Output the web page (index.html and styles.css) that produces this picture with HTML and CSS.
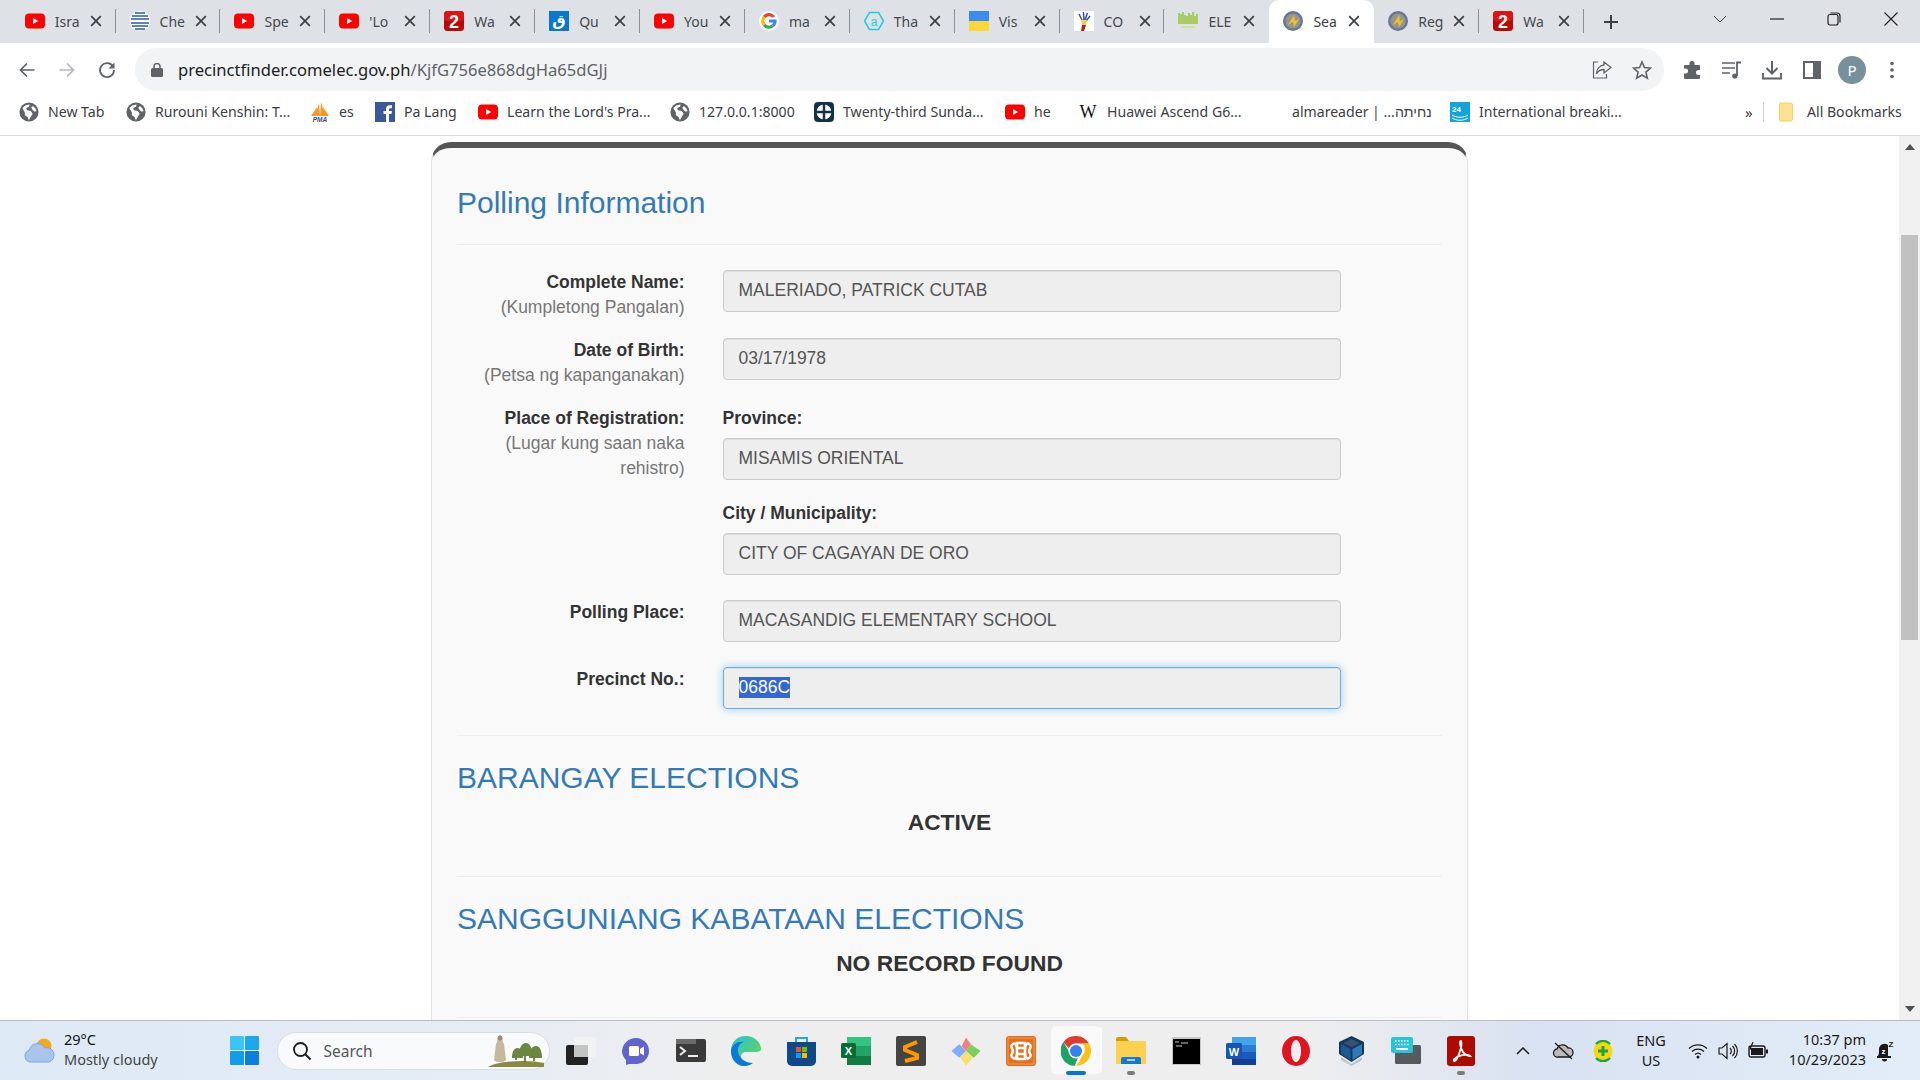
FILE: index.html
```html
<!DOCTYPE html>
<html lang="en">
<head>
  <meta charset="UTF-8" />
  <meta name="viewport" content="width=device-width, initial-scale=1.0" />
  <title>Precinct Finder</title>
  <link rel="stylesheet" href="styles.css">
</head>
<body>
  <svg class="icon-defs" aria-hidden="true">
    <symbol id="i-yt" viewBox="0 0 20 20"><rect x="0" y="2.500" width="20" height="15" rx="4" fill="#f00"/><path d="M8 7l5.200 3L8 13z" fill="#fff"/></symbol>
    <symbol id="i-two" viewBox="0 0 20 20"><rect width="20" height="20" rx="3.500" fill="#b80808"/><rect width="20" height="10" rx="3.500" fill="#dc1414"/><text x="10" y="17" text-anchor="middle" class="two-glyph">2</text></symbol>
    <symbol id="i-globe" viewBox="0 0 18 18"><circle cx="9" cy="9" r="8.600" fill="#5f6368"/><path d="M3 5.500l3-2.600 3.600-.6-.6 2-2.400 1.200.5 2 3.600.6 1.600 2.600-2 3-1.400 2.800-1.200-3-2.400-1.600v-2.400zM12.600 3.600l2.400 2.400.8 2.400-2.200.2-1.600-1.800-1-1.800z" fill="#fff"/></symbol>
    <symbol id="i-seal" viewBox="0 0 20 20"><circle cx="10" cy="10" r="10" fill="#66779f"/><circle cx="10" cy="10" r="7.500" fill="#9a9680"/><path d="M5 14L11 4l1 6 4-2-5 8-1-5z" fill="#e4c23a"/></symbol>
    <symbol id="i-x" viewBox="0 0 12 12"><path d="M1.200 1.200l9.600 9.600M10.800 1.200l-9.600 9.600" stroke="#3c4043" stroke-width="1.700" fill="none"/></symbol>
  </svg>

  <div class="browser">
    <div class="tabstrip">
      <div class="tab"><svg class="favicon"><use href="#i-yt"/></svg><span class="tab-title">Isra</span><svg class="tab-close"><use href="#i-x"/></svg></div>
      <div class="tab"><svg class="favicon" viewBox="0 0 20 20"><circle cx="10" cy="10" r="10" fill="#fff"/><path d="M2 5h16M1 8h18M1 12h18M2 15h16M5 18h10M5 2h10" stroke="#2c5fa0" stroke-width="1.600"/><rect x="1" y="9" width="18" height="2" fill="#fff"/></svg><span class="tab-title">Che</span><svg class="tab-close"><use href="#i-x"/></svg></div>
      <div class="tab"><svg class="favicon"><use href="#i-yt"/></svg><span class="tab-title">Spe</span><svg class="tab-close"><use href="#i-x"/></svg></div>
      <div class="tab"><svg class="favicon"><use href="#i-yt"/></svg><span class="tab-title">'Lo</span><svg class="tab-close"><use href="#i-x"/></svg></div>
      <div class="tab"><svg class="favicon"><use href="#i-two"/></svg><span class="tab-title">Wa</span><svg class="tab-close"><use href="#i-x"/></svg></div>
      <div class="tab"><svg class="favicon" viewBox="0 0 20 20"><rect width="20" height="20" fill="#0a78c8"/><text x="10" y="15" text-anchor="middle" class="qaf-glyph">ق</text></svg><span class="tab-title">Qu</span><svg class="tab-close"><use href="#i-x"/></svg></div>
      <div class="tab"><svg class="favicon"><use href="#i-yt"/></svg><span class="tab-title">You</span><svg class="tab-close"><use href="#i-x"/></svg></div>
      <div class="tab"><svg class="favicon" viewBox="0 0 20 20"><circle cx="10" cy="10" r="10" fill="#fff"/><path d="M16 5.200A7.500 7.500 0 0 0 4 5l2.600 2a4.400 4.400 0 0 1 7-.2z" fill="#ea4335"/><path d="M4 5a7.600 7.600 0 0 0 0 10l2.600-2a4.400 4.400 0 0 1 0-6z" fill="#fbbc05"/><path d="M4 15a7.500 7.500 0 0 0 11 .8l-2.500-2a4.400 4.400 0 0 1-5.900-.8z" fill="#34a853"/><path d="M17.500 8.600H10v3h4.200a3.800 3.800 0 0 1-1.700 2.200l2.500 2a7.600 7.600 0 0 0 2.500-7.200z" fill="#4285f4"/></svg><span class="tab-title">ma</span><svg class="tab-close"><use href="#i-x"/></svg></div>
      <div class="tab"><svg class="favicon" viewBox="0 0 20 20"><path d="M5.500 1.500h9L19.500 10l-5 8.500h-9L.5 10z" fill="none" stroke="#22cde0" stroke-width="1.500"/><text x="10" y="14.500" text-anchor="middle" class="hex-glyph">a</text></svg><span class="tab-title">Tha</span><svg class="tab-close"><use href="#i-x"/></svg></div>
      <div class="tab"><svg class="favicon" viewBox="0 0 20 20"><rect width="20" height="10" fill="#3a8cf0"/><rect y="10" width="20" height="10" fill="#fdd835"/></svg><span class="tab-title">Vis</span><svg class="tab-close"><use href="#i-x"/></svg></div>
      <div class="tab"><svg class="favicon" viewBox="0 0 20 20"><rect width="20" height="20" fill="#fff"/><path d="M8 9L5 3M10 9l-.6-8M11 9l2.400-7M12 10l4-5" stroke="#3b4fb0" stroke-width="1.500"/><path d="M7 9h6l-1 5H8z" fill="#f3d34a"/><path d="M8 14h4l-2 6H7z" fill="#a8201a"/></svg><span class="tab-title">CO</span><svg class="tab-close"><use href="#i-x"/></svg></div>
      <div class="tab tab-before-active"><svg class="favicon" viewBox="0 0 20 20"><path d="M1 2v11M3 3v10M5 1v12M7 4v9M9 5v8M11 2v11M13 4v9M15 1v12M17 5v8M19 3v10" stroke="#8fbf1f" stroke-width="1.300"/><path d="M3 16h14" stroke="#cfe39a" stroke-width="2"/></svg><span class="tab-title">ELE</span><svg class="tab-close"><use href="#i-x"/></svg></div>
      <div class="tab tab-active"><svg class="favicon"><use href="#i-seal"/></svg><span class="tab-title">Sea</span><svg class="tab-close"><use href="#i-x"/></svg></div>
      <div class="tab tab-after-active"><svg class="favicon"><use href="#i-seal"/></svg><span class="tab-title">Reg</span><svg class="tab-close"><use href="#i-x"/></svg></div>
      <div class="tab"><svg class="favicon"><use href="#i-two"/></svg><span class="tab-title">Wa</span><svg class="tab-close"><use href="#i-x"/></svg></div>
      <svg class="new-tab" viewBox="0 0 16 16"><path d="M8 1v14M1 8h14" stroke="#3c4043" stroke-width="2"/></svg>
      <div class="window-controls">
        <div class="window-btn"><svg width="14" height="8" viewBox="0 0 14 8"><path d="M1 1l6 6 6-6" fill="none" stroke="#444" stroke-width="1"/></svg></div>
        <div class="window-btn"><svg width="14" height="2" viewBox="0 0 14 2"><path d="M0 1h14" stroke="#222" stroke-width="1.200"/></svg></div>
        <div class="window-btn"><svg width="14" height="14" viewBox="0 0 14 14"><rect x="1" y="2.500" width="10" height="10.500" rx="2" fill="none" stroke="#222" stroke-width="1.200"/><path d="M3.500 1h6.500a3 3 0 0 1 3 3v6.500" fill="none" stroke="#222" stroke-width="1.200"/></svg></div>
        <div class="window-btn"><svg width="14" height="14" viewBox="0 0 14 14"><path d="M.5.500l13 13M13.500.500l-13 13" stroke="#222" stroke-width="1.100"/></svg></div>
      </div>
    </div>

    <div class="toolbar">
      <div class="tool-btn"><svg width="16" height="16" viewBox="0 0 16 16"><path d="M15.500 8H2M8 1.500L1.500 8 8 14.500" fill="none" stroke="#5f6368" stroke-width="1.700"/></svg></div>
      <div class="tool-btn"><svg width="16" height="16" viewBox="0 0 16 16"><path d="M.5 8H14M8 1.500L14.500 8 8 14.500" fill="none" stroke="#b4b7bb" stroke-width="1.700"/></svg></div>
      <div class="tool-btn"><svg width="18" height="18" viewBox="0 0 18 18"><path d="M15 5.500A7 7 0 1 0 16 9" fill="none" stroke="#5f6368" stroke-width="1.800"/><path d="M16.500 1.500v6h-6z" fill="#5f6368"/></svg></div>
      <div class="omnibox">
        <svg class="lock" width="12" height="14" viewBox="0 0 12 14"><rect y="5" width="12" height="9" rx="1.500" fill="#5f6368"/><path d="M3 6V3.500a3 3 0 0 1 6 0V6" fill="none" stroke="#5f6368" stroke-width="1.500"/></svg>
        <span class="url"><span class="url-host">precinctfinder.comelec.gov.ph</span>/KjfG756e868dgHa65dGJj</span>
        <div class="omni-actions">
          <svg width="20" height="20" viewBox="0 0 20 20"><path d="M6 2H1.500v16h13v-4" fill="none" stroke="#5f6368" stroke-width="1.200"/><path d="M12 2l7 5.500-7 5.500V9.500C8.500 9.500 6 11 4.500 14c0-5 3-8.500 7.500-9z" fill="none" stroke="#5f6368" stroke-width="1.300"/></svg>
          <svg width="20" height="20" viewBox="0 0 20 20"><path d="M10 2l2.400 5.600 6.100.5-4.600 4 1.400 6L10 15l-5.300 3.100 1.400-6-4.600-4 6.100-.5z" fill="none" stroke="#5f6368" stroke-width="1.600"/></svg>
        </div>
      </div>
      <div class="tool-btn tool-first"><svg width="20" height="20" viewBox="0 0 20 20"><path d="M7.500 3.500a2.500 2.500 0 0 1 5 0V5H17a1 1 0 0 1 1 1v4h-1.500a2.500 2.500 0 0 0 0 5H18v3a1 1 0 0 1-1 1H3a1 1 0 0 1-1-1v-4.500h1.500a2.500 2.500 0 0 0 0-5H2V6a1 1 0 0 1 1-1h4.500z" fill="#5f6368"/></svg></div>
      <div class="tool-btn"><svg width="20" height="18" viewBox="0 0 20 18"><path d="M0 2h13M0 7h13M0 12h8" stroke="#5f6368" stroke-width="1.600"/><path d="M15 15V1.500h4" fill="none" stroke="#5f6368" stroke-width="1.800"/><circle cx="12.800" cy="15" r="2.600" fill="#5f6368"/></svg></div>
      <div class="tool-btn"><svg width="20" height="20" viewBox="0 0 20 20"><path d="M10 1v12M4.500 8l5.500 5.500L15.500 8" fill="none" stroke="#5f6368" stroke-width="2"/><path d="M1 13v5.500h18V13" fill="none" stroke="#5f6368" stroke-width="1.800"/></svg></div>
      <div class="tool-btn"><svg width="18" height="18" viewBox="0 0 18 18"><rect x="1" y="1" width="16" height="16" fill="none" stroke="#5f6368" stroke-width="2"/><rect x="10" y="1" width="7" height="16" fill="#5f6368"/></svg></div>
      <div class="tool-btn"><span class="avatar">P</span></div>
      <div class="tool-btn"><svg width="4" height="18" viewBox="0 0 4 18"><circle cx="2" cy="2.500" r="1.800" fill="#5f6368"/><circle cx="2" cy="9" r="1.800" fill="#5f6368"/><circle cx="2" cy="15.500" r="1.800" fill="#5f6368"/></svg></div>
    </div>

    <div class="bookmarks">
      <div class="bookmark bm-newtab"><svg class="bm-icon"><use href="#i-globe"/></svg><span>New Tab</span></div>
      <div class="bookmark bm-rurouni"><svg class="bm-icon"><use href="#i-globe"/></svg><span>Rurouni Kenshin: T...</span></div>
      <div class="bookmark bm-es"><svg class="bm-icon" viewBox="0 0 20 20"><path d="M5 14L9 1l1 13zM10 14l1-14 4 14zM14 14l-1-9 6 9zM1 14l6-9-1 9z" fill="#f09a2a"/><text x="10" y="20" text-anchor="middle" class="pma-glyph">PMA</text></svg><span>es</span></div>
      <div class="bookmark bm-palang"><svg class="bm-icon" viewBox="0 0 20 20"><rect width="20" height="20" fill="#3b5998"/><path d="M11 20v-8H8.500V9H11V7c0-2.500 1.500-3.800 3.700-3.800H17v3h-1.500c-1.200 0-1.500.6-1.500 1.400V9h3l-.5 3H14v8z" fill="#fff"/></svg><span>Pa Lang</span></div>
      <div class="bookmark bm-learn"><svg class="bm-icon"><use href="#i-yt"/></svg><span>Learn the Lord's Pra...</span></div>
      <div class="bookmark bm-local"><svg class="bm-icon"><use href="#i-globe"/></svg><span>127.0.0.1:8000</span></div>
      <div class="bookmark bm-twenty"><svg class="bm-icon" viewBox="0 0 20 20"><rect width="20" height="20" rx="4" fill="#12304a"/><circle cx="10" cy="10" r="7.500" fill="#fff"/><path d="M10 2v16M2 10h16" stroke="#12304a" stroke-width="2.400"/></svg><span>Twenty-third Sunda...</span></div>
      <div class="bookmark bm-he"><svg class="bm-icon"><use href="#i-yt"/></svg><span>he</span></div>
      <div class="bookmark bm-huawei"><svg class="bm-icon" viewBox="0 0 20 20"><text x="10" y="16" text-anchor="middle" class="wiki-glyph">W</text></svg><span>Huawei Ascend G6...</span></div>
      <div class="bookmark bm-alma"><span>almareader | ...נחיתה</span></div>
      <div class="bookmark bm-france"><svg class="bm-icon" viewBox="0 0 20 20"><rect width="20" height="20" fill="#12a5dc"/><text x="2" y="10" class="france-glyph">24</text><path d="M2 13c5 3 11 3 16 0M2 16c5 3 11 3 16 0" stroke="#fff" fill="none"/></svg><span>International breaki...</span></div>
      <span class="bm-more">»</span>
      <span class="bm-sep"></span>
      <div class="bookmark bm-all"><svg class="bm-icon bm-folder" viewBox="0 0 15 20"><path d="M1.500 1h10a2 2 0 0 1 2 2v14a2 2 0 0 1-2 2h-10a1 1 0 0 1-1-1V2a1 1 0 0 1 1-1z" fill="#fde293" stroke="#f5cf64"/></svg><span>All Bookmarks</span></div>
    </div>

    <div class="viewport">
      <div class="page">
        <div class="card">
          <h2 class="heading">Polling Information</h2>
          <hr class="rule rule-top">

          <div class="field-row field-row-tall">
            <div class="field-label"><strong>Complete Name:</strong><span>(Kumpletong Pangalan)</span></div>
            <div class="field-value">MALERIADO, PATRICK CUTAB</div>
          </div>
          <div class="field-row field-row-tall">
            <div class="field-label"><strong>Date of Birth:</strong><span>(Petsa ng kapanganakan)</span></div>
            <div class="field-value">03/17/1978</div>
          </div>
          <div class="field-row">
            <div class="field-label"><strong>Place of Registration:</strong><span>(Lugar kung saan naka rehistro)</span></div>
            <div class="field-stack">
              <strong class="sub-label">Province:</strong>
              <div class="field-value">MISAMIS ORIENTAL</div>
              <strong class="sub-label sub-label-next">City / Municipality:</strong>
              <div class="field-value">CITY OF CAGAYAN DE ORO</div>
            </div>
          </div>
          <div class="field-row">
            <div class="field-label"><strong>Polling Place:</strong></div>
            <div class="field-value">MACASANDIG ELEMENTARY SCHOOL</div>
          </div>
          <div class="field-row field-row-last">
            <div class="field-label"><strong>Precinct No.:</strong></div>
            <div class="field-value field-focus"><span class="selected">0686C</span></div>
          </div>

          <hr class="rule">
          <h2 class="heading">BARANGAY ELECTIONS</h2>
          <p class="status">ACTIVE</p>
          <hr class="rule">
          <h2 class="heading">SANGGUNIANG KABATAAN ELECTIONS</h2>
          <p class="status">NO RECORD FOUND</p>
          <hr class="rule">
        </div>
      </div>
      <div class="scrollbar">
        <span class="arrow-up"></span>
        <div class="thumb"></div>
        <span class="arrow-down"></span>
      </div>
    </div>

    <div class="taskbar">
      <div class="weather">
        <svg width="31" height="25" viewBox="0 0 31 25"><circle cx="20" cy="8" r="7.500" fill="#f5a623"/><path d="M7 24a6 6 0 0 1-1.500-11.800A8 8 0 0 1 20.500 10 6 6 0 0 1 25 24z" fill="#a9c6ea" stroke="#7fa6d8"/></svg>
        <div class="weather-text"><span class="weather-temp">29°C</span><span>Mostly cloudy</span></div>
      </div>
      <svg class="win-logo" width="29" height="29" viewBox="0 0 29 29"><rect width="14" height="14" rx="1" fill="#3cc4f7"/><rect x="15" width="14" height="14" rx="1" fill="#1fa7ee"/><rect y="15" width="14" height="14" rx="1" fill="#149beb"/><rect x="15" y="15" width="14" height="14" rx="1" fill="#0a7fdb"/></svg>
      <div class="search">
        <svg width="20" height="20" viewBox="0 0 20 20"><circle cx="8.500" cy="8.500" r="6.500" fill="none" stroke="#1a1a1a" stroke-width="1.800"/><path d="M13.500 13.500l5 5" stroke="#1a1a1a" stroke-width="2"/></svg>
        <span>Search</span>
        <svg class="search-art" width="56" height="34" viewBox="0 0 56 34"><path d="M0 33c10-6 40-8 56-4v4z" fill="#8a8a3c"/><path d="M8 10c2-2 1-8 4-9 3 1 2 7 4 9l2 16c-3 3-9 3-12 0z" fill="#c4b9a0"/><circle cx="12" cy="4" r="2.500" fill="#9a8c76"/><path d="M28 26v-8M37 28V14M46 27V16" stroke="#5b5336" stroke-width="1.500"/><path d="M24 24c0-8 3-10 6-10s5 4 5 10zM31 22c0-9 3-13 7-13s6 5 6 13zM41 24c0-8 3-12 7-12s6 5 6 12z" fill="#6a8640"/></svg>
      </div>
      <div class="task-icons">
        <div class="task-item"><svg width="30" height="28" viewBox="0 0 30 28"><rect y="8" width="22" height="20" rx="2" fill="#222"/><rect x="8" width="22" height="20" rx="2" fill="#f2f2f2" opacity=".9"/><rect x="8" y="8" width="14" height="12" fill="#c4c4c4"/></svg></div>
        <div class="task-item"><svg width="28" height="28" viewBox="0 0 28 28"><path d="M0 14A14 14 0 0 1 14 1a13 13 0 0 1 13 13 13 13 0 0 1-13 13H7l-3 1v-5a14 14 0 0 1-4-9z" fill="#6264c9"/><rect x="7" y="9" width="10" height="10" rx="1.500" fill="#fff"/><path d="M18 12l4-2.500v9L18 16z" fill="#fff"/></svg></div>
        <div class="task-item"><svg width="30" height="23" viewBox="0 0 30 23"><rect width="30" height="23" rx="2" fill="#3a3a3a"/><rect width="20" height="5" fill="#6a6a6a"/><path d="M4 8l5 4-5 4" fill="none" stroke="#eee" stroke-width="2"/><path d="M12 17h10" stroke="#eee" stroke-width="2"/></svg></div>
        <div class="task-item"><svg width="30" height="30" viewBox="0 0 30 30"><defs><linearGradient id="edge-g" x1="0" y1="0" x2="1" y2="1"><stop offset="0" stop-color="#2bc3d2"/><stop offset="1" stop-color="#6bd64c"/></linearGradient></defs><path d="M15 0C6 0 0 6 0 15c0 9 6 15 13 15 4 0 7-1 9-3-6 2-12-1-12-6 0-3 2-5 5-5s6 0 8 0c3 0 7 0 7-3C30 6 23 0 15 0z" fill="url(#edge-g)"/><path d="M0 15C1 8 7 5 13 6c-4 1-7 5-6 10 1 6 7 11 15 11-3 2-6 3-9 3-7 0-13-7-13-15z" fill="#0a78d4"/></svg></div>
        <div class="task-item"><svg width="29" height="30" viewBox="0 0 29 30"><path d="M9 7V2h11v5" fill="none" stroke="#21a6e8" stroke-width="2"/><path d="M0 6h29v19a5 5 0 0 1-5 5H5a5 5 0 0 1-5-5z" fill="#0e4a8a"/><rect x="9" y="11" width="5" height="5" fill="#f25022"/><rect x="15" y="11" width="5" height="5" fill="#7fba00"/><rect x="9" y="17" width="5" height="5" fill="#00a4ef"/><rect x="15" y="17" width="5" height="5" fill="#ffb900"/></svg></div>
        <div class="task-item"><svg width="30" height="28" viewBox="0 0 30 28"><rect x="6" width="24" height="9" fill="#33c481"/><rect x="6" y="9" width="24" height="10" fill="#21a366"/><rect x="6" y="19" width="24" height="9" fill="#107c41"/><rect y="6" width="15" height="15" rx="1.500" fill="#0a6b36"/><text x="7.500" y="18" text-anchor="middle" class="office-glyph">X</text></svg></div>
        <div class="task-item"><svg width="30" height="30" viewBox="0 0 30 30"><rect width="30" height="30" rx="2" fill="#444"/><path d="M21 6L9 11v3l12 5v3L9 25" fill="none" stroke="#ff9800" stroke-width="4"/></svg></div>
        <div class="task-item"><svg width="31" height="30" viewBox="0 0 31 30"><path d="M15.500 15L11 10l4.500-9 5 7z" fill="#f08080"/><path d="M15.500 15l5-7 10 7-7 7z" fill="#7fce5c"/><path d="M15.500 15l7 7-7 8-6-8z" fill="#fbdf6c"/><path d="M15.500 15l-7 7-8-7 8-7z" fill="#7eaef8"/></svg></div>
        <div class="task-item"><svg width="30" height="30" viewBox="0 0 30 30"><rect width="30" height="30" rx="3" fill="#e4701e"/><rect x="2" y="2" width="26" height="26" fill="none" stroke="#f59a52"/><path d="M11 7h8v5h-8zM11 18h8v5h-8z" fill="none" stroke="#fff" stroke-width="2.500"/><path d="M6 9c2-3 5-1 5 3v6c0 4-3 6-5 3-2-2 1-4 1-6s-3-4-1-6zM24 9c-2-3-5-1-5 3v6c0 4 3 6 5 3 2-2-1-4-1-6s3-4 1-6z" fill="none" stroke="#fff" stroke-width="2.500"/></svg></div>
        <div class="task-item task-active"><svg width="30" height="30" viewBox="0 0 30 30"><path d="M15 0a15 15 0 0 1 13 7.500H15a7.500 7.500 0 0 0-7 5L2.500 6A15 15 0 0 1 15 0z" fill="#e33b2e"/><path d="M28 7.500A15 15 0 0 1 15.500 30L22 18.500a7.500 7.500 0 0 0-1-11z" fill="#fbc116"/><path d="M2.500 6l6.400 11a7.500 7.500 0 0 0 8 5L13.500 30A15 15 0 0 1 2.500 6z" fill="#1ea362"/><circle cx="15" cy="15" r="7.500" fill="#fff"/><circle cx="15" cy="15" r="6" fill="#3a7ff0"/></svg></div>
        <div class="task-item task-running"><svg width="30" height="27" viewBox="0 0 30 27"><path d="M0 2a2 2 0 0 1 2-2h8l3 4H0z" fill="#d99a08"/><rect y="4" width="30" height="23" fill="#fdd150"/><path d="M5 27v-5a2 2 0 0 1 2-2h16a2 2 0 0 1 2 2v5z" fill="#1579c9"/><path d="M11 23h8" stroke="#cfe6f7" stroke-width="1.500"/></svg></div>
        <div class="task-item"><svg width="29" height="28" viewBox="0 0 29 28"><rect width="29" height="28" fill="#c8c8c8"/><rect x="1" y="2" width="27" height="25" fill="#000"/><path d="M3 5h4M9 6h7M4 9h6" stroke="#ccc"/></svg></div>
        <div class="task-item"><svg width="30" height="28" viewBox="0 0 30 28"><rect x="6" width="24" height="8" fill="#41a5ee"/><rect x="6" y="8" width="24" height="7" fill="#2b7cd3"/><rect x="6" y="15" width="24" height="7" fill="#185abd"/><rect x="6" y="22" width="24" height="6" fill="#103f91"/><rect y="6" width="16" height="16" rx="1.500" fill="#1a53b0"/><text x="8" y="18.500" text-anchor="middle" class="office-glyph">W</text></svg></div>
        <div class="task-item"><svg width="30" height="30" viewBox="0 0 30 30"><path d="M15 0a14 15 0 1 0 0 30 14 15 0 0 0 0-30zm0 4c3 0 5 5 5 11s-2 11-5 11-5-5-5-11 2-11 5-11z" fill="#e0141e" fill-rule="evenodd"/></svg></div>
        <div class="task-item"><svg width="25" height="30" viewBox="0 0 25 30"><path d="M12.500 0L25 6v12L12.500 26 0 18V6z" fill="#14385f"/><path d="M12.500 3L21 7l-8.500 4L4 7z" fill="#e9edf1" opacity=".15"/><path d="M2 8l9.500 5v11L2 18z" fill="#1c5a94"/><path d="M23 8l-9.500 5v11L23 18z" fill="#2f79b9"/><path d="M2 21l10.500 7L23 21v3l-10.500 6L2 24z" fill="#b8c2cc"/></svg></div>
        <div class="task-item"><svg width="30" height="27" viewBox="0 0 30 27"><rect x="4" y="8" width="26" height="19" rx="1.500" fill="#555a5e"/><rect width="22" height="16" rx="2" fill="#2bc4d6"/><path d="M4 4h14M4 7.500h14" stroke="#fff" stroke-dasharray="1.500 1.500" stroke-width="1.500"/><path d="M5 12h12" stroke="#fff" stroke-width="2"/></svg></div>
        <div class="task-item task-running"><svg width="28" height="30" viewBox="0 0 28 30"><rect width="28" height="30" rx="3" fill="#ad0b00"/><path d="M14 5c-2 0-1 6 2 11 2 3 6 4 7 4-2-2-8-1-13 1-3 2-4 3-3 4 2 1 5-6 6-10 1-3 2-8 1-10z" fill="none" stroke="#fff" stroke-width="1.800"/></svg></div>
      </div>
      <div class="tray">
        <div class="tray-slot"><svg width="14" height="8" viewBox="0 0 14 8"><path d="M1 7l6-6 6 6" fill="none" stroke="#1a1a1a" stroke-width="1.500"/></svg></div>
        <div class="tray-slot"><svg width="22" height="18" viewBox="0 0 22 18"><path d="M6 15a4 4 0 0 1-1-8 6 6 0 0 1 11-1 4.500 4.500 0 0 1 1 9z" fill="#bbb" stroke="#1a1a1a" stroke-width="1.300"/><path d="M3 1l17 16" stroke="#1a1a1a" stroke-width="1.300"/></svg></div>
        <div class="tray-slot"><svg width="20" height="22" viewBox="0 0 20 22"><circle cx="10" cy="11" r="9.500" fill="#f5d90a"/><path d="M3 4a9.500 9.500 0 0 1 14 0M17 18a9.500 9.500 0 0 1-14 0" fill="none" stroke="#1fa34a" stroke-width="2.400"/><path d="M10 6v10M5 11h10" stroke="#1fa34a" stroke-width="3"/></svg></div>
        <div class="tray-lang"><span>ENG</span><span>US</span></div>
        <div class="tray-group">
          <div class="tray-mini"><svg width="20" height="16" viewBox="0 0 20 16"><path d="M1 5.500a13 13 0 0 1 18 0M4 8.500a9 9 0 0 1 12 0M7 11.500a4.500 4.500 0 0 1 6 0" fill="none" stroke="#1a1a1a" stroke-width="1.300"/><circle cx="10" cy="14" r="1.500" fill="#1a1a1a"/></svg></div>
          <div class="tray-mini"><svg width="20" height="18" viewBox="0 0 20 18"><path d="M1 6h3l5-4.500v15L4 12H1z" fill="none" stroke="#1a1a1a" stroke-width="1.200"/><path d="M12 6a4 4 0 0 1 0 6M14.500 4a7 7 0 0 1 0 10M16.500 2a10 10 0 0 1 0 14" fill="none" stroke="#1a1a1a" stroke-width="1.200"/></svg></div>
          <div class="tray-mini"><svg width="20" height="18" viewBox="0 0 20 18"><rect x="1" y="4" width="16" height="11" rx="2" fill="none" stroke="#1a1a1a" stroke-width="1.400"/><rect x="3" y="6" width="12" height="7" fill="#1a1a1a"/><rect x="18" y="7.500" width="2" height="4" fill="#1a1a1a"/><path d="M5 0L2 7h3l-1 4" fill="none" stroke="#1a1a1a" stroke-width="1.200"/></svg></div>
        </div>
        <div class="clock"><span>10:37 pm</span><span>10/29/2023</span></div>
        <svg class="bell" width="20" height="24" viewBox="0 0 20 24"><path d="M3 17c1-2 1-4 1-7a5.500 5.500 0 0 1 9-4v11h3v2H2v-2z" fill="#1a1a1a"/><path d="M7 20h5a2.500 2.500 0 0 1-5 0z" fill="#1a1a1a"/><text x="8.500" y="15" text-anchor="middle" class="bell-glyph">z</text><text x="16" y="8" text-anchor="middle" class="bell-z">Z</text></svg>
      </div>
    </div>
  </div>
</body>
</html>
```

FILE: styles.css
```css
* {
  box-sizing: border-box;
}
html, body {
  margin: 0;
  height: 100%;
  overflow: hidden;
}
body {
  font-family: "Liberation Sans", Arial, sans-serif;
  background: #fff;
  color: #333;
}
.icon-defs {
  display: none;
}
.browser {
  display: flex;
  flex-direction: column;
  height: 1080px;
}

/* tabs */
.tabstrip {
  display: flex;
  align-items: center;
  height: 43px;
  flex: none;
  padding-left: 10.7px;
  background: #dee1e6;
  font-family: "Noto Sans", sans-serif;
  font-size: 14px;
  color: #45494e;
}
.tab {
  position: relative;
  display: flex;
  align-items: center;
  flex: none;
  width: 104.9px;
  height: 43px;
  padding: 0 0 1px 14px;
}
.tab::after {
  content: "";
  position: absolute;
  top: 9px;
  right: 0;
  width: 1px;
  height: 24px;
  background: #8e9196;
}
.favicon {
  width: 20px;
  height: 20px;
  flex: none;
}
.tab-title {
  width: 26px;
  margin-left: 10px;
  white-space: nowrap;
}
.tab-close {
  width: 12px;
  height: 12px;
  margin-left: 9px;
  flex: none;
}
.tab-before-active::after,
.tab-active::after {
  display: none;
}
.tab-active {
  background: #fff;
  border-radius: 10px 10px 0 0;
  color: #3c4043;
}
.tab-active::before {
  content: "";
  position: absolute;
  left: -10px;
  right: -10px;
  bottom: 0;
  height: 10px;
  z-index: -1;
  background: #fff;
}
.tab-before-active {
  z-index: 1;
  background: #dee1e6;
  border-bottom-right-radius: 10px;
}
.tab-after-active {
  z-index: 1;
  background: #dee1e6;
  border-bottom-left-radius: 10px;
}
.two-glyph {
  font: bold 18px "Liberation Sans", sans-serif;
  fill: #fff;
}
.qaf-glyph {
  font: bold 15px "DejaVu Sans", sans-serif;
  fill: #fff;
}
.hex-glyph {
  font: 12px "Liberation Sans", sans-serif;
  fill: #22cde0;
}
.new-tab {
  width: 16px;
  height: 16px;
  margin-left: 19px;
  flex: none;
}
.window-controls {
  display: flex;
  margin: 0 1px 0 auto;
  align-self: flex-start;
}
.window-btn {
  display: flex;
  align-items: center;
  justify-content: center;
  width: 57px;
  height: 38px;
}

/* address bar */
.toolbar {
  display: flex;
  align-items: center;
  flex: none;
  height: 48px;
  padding: 5px 8px 0 7px;
  background: #fff;
}
.tool-btn {
  display: flex;
  align-items: center;
  justify-content: center;
  width: 40px;
  height: 43px;
  flex: none;
}
.tool-first {
  margin-left: 8px;
}
.omnibox {
  display: flex;
  align-items: center;
  width: 1529px;
  height: 43px;
  margin-left: 8px;
  padding: 0 12px 0 16px;
  flex: none;
  border-radius: 22px;
  background: #f1f3f4;
}
.url {
  margin-left: 15px;
  font-family: "Noto Sans", sans-serif;
  font-size: 16.6px;
  color: #5f6368;
  white-space: nowrap;
}
.url-host {
  color: #202124;
}
.omni-actions {
  display: flex;
  gap: 20px;
  margin-left: auto;
}
.avatar {
  display: flex;
  align-items: center;
  justify-content: center;
  width: 28px;
  height: 28px;
  border-radius: 50%;
  background: #78909c;
  color: #fff;
  font-family: "Noto Sans", sans-serif;
  font-size: 15px;
}

/* bookmarks */
.bookmarks {
  display: flex;
  align-items: center;
  flex: none;
  height: 45px;
  padding: 0 0 3px 19px;
  border-bottom: 1px solid #d9dbde;
  background: #fff;
  font-family: "Noto Sans", sans-serif;
  font-size: 14.1px;
  color: #3c4043;
  white-space: nowrap;
}
.bookmark {
  display: flex;
  align-items: center;
  gap: 9px;
  flex: none;
}
.bm-icon {
  width: 20px;
  height: 20px;
  flex: none;
}
.bm-newtab { width: 107px; }
.bm-rurouni { width: 184px; }
.bm-es { width: 65px; }
.bm-palang { width: 103px; }
.bm-learn { width: 192px; }
.bm-local { width: 144px; }
.bm-twenty { width: 191px; }
.bm-he { width: 73px; }
.bm-huawei { width: 214px; }
.bm-alma { width: 158px; }
.bm-france { width: 295px; }
.bm-more {
  width: 18px;
  font-size: 15px;
}
.bm-sep {
  width: 1px;
  height: 20px;
  background: #d0d2d6;
  margin-right: 15px;
}
.bm-all {
  gap: 13px;
}
.bm-folder {
  width: 15px;
}
.pma-glyph {
  font: italic bold 6.500px "Liberation Sans", sans-serif;
  fill: #3a4a8c;
}
.wiki-glyph {
  font: 18px "Liberation Serif", serif;
  fill: #111;
}
.france-glyph {
  font: bold 8px "Liberation Sans", sans-serif;
  fill: #fff;
}

/* page */
.viewport {
  display: flex;
  flex: 1;
  min-height: 0;
  overflow: hidden;
}
.page {
  flex: 1;
  padding-top: 6px;
  overflow: hidden;
}
.card {
  width: 1037px;
  margin: 0 auto;
  padding: 0 25px;
  border: 1px solid #e3e3e3;
  border-top: 6px solid #555;
  border-radius: 20px 20px 0 0;
  background: #f9f9f9;
}
.heading {
  margin: 0;
  font-size: 30px;
  font-weight: 400;
  line-height: 33px;
  color: #337ab7;
}
.card > .heading:first-child {
  margin-top: 38px;
}
.rule {
  margin: 0 0 25px;
  border: 0;
  border-top: 1px solid #eee;
}
.rule-top {
  margin-top: 25px;
}
.field-row {
  display: grid;
  grid-template-columns: 227.500px 618.500px;
  column-gap: 38px;
  margin-bottom: 25px;
  font-size: 17.5px;
}
.field-row-tall {
  height: 42px;
  margin-bottom: 26px;
}
.field-row-last {
  margin-bottom: 26px;
}
.field-label {
  display: flex;
  flex-direction: column;
  text-align: right;
  line-height: 25px;
  color: #777;
}
.field-label strong,
.sub-label {
  color: #333;
  font-weight: 700;
}
.field-value {
  height: 42px;
  padding: 0 15px;
  border: 1px solid #ccc;
  border-radius: 4px;
  background: #eee;
  box-shadow: inset 0 1px 1px rgba(0, 0, 0, .075);
  line-height: 39px;
  color: #555;
}
.field-focus {
  border-color: #66afe9;
  box-shadow: inset 0 1px 1px rgba(0, 0, 0, .075), 0 0 8px rgba(102, 175, 233, .6);
}
.selected {
  display: inline-block;
  height: 21px;
  line-height: 21px;
  background: #3367d1;
  color: #fff;
}
.field-stack {
  display: flex;
  flex-direction: column;
}
.sub-label {
  line-height: 25px;
  margin-bottom: 7px;
}
.sub-label-next {
  margin-top: 21px;
}
.status {
  margin: 12px 0 38px;
  font-size: 22.800px;
  font-weight: 700;
  line-height: 32px;
  text-align: center;
  color: #333;
}

/* scrollbar */
.scrollbar {
  position: relative;
  display: flex;
  flex-direction: column;
  align-items: center;
  flex: none;
  width: 21px;
  padding: 8px 0;
  background: #f1f1f1;
}
.arrow-up,
.arrow-down {
  width: 0;
  height: 0;
  border-left: 5px solid transparent;
  border-right: 5px solid transparent;
}
.arrow-up {
  border-bottom: 6px solid #505050;
}
.arrow-down {
  margin-top: auto;
  border-top: 6px solid #505050;
}
.thumb {
  width: 17px;
  height: 405px;
  margin-top: 85px;
  background: #c1c1c1;
}

/* windows taskbar */
.taskbar {
  display: flex;
  align-items: center;
  flex: none;
  height: 60px;
  padding-left: 24px;
  border-top: 1px solid #b9bec6;
  background: linear-gradient(90deg, #dde9f5 0, #e6edf6 25%, #eeeeee 38%, #eeeeee 68%, #d9e2f2 80%, #e3edf8 100%);
  font-family: "Noto Sans", sans-serif;
  color: #1a1a1a;
}
.weather {
  display: flex;
  align-items: center;
  gap: 9px;
  width: 206px;
  flex: none;
}
.weather-text {
  display: flex;
  flex-direction: column;
  padding-bottom: 4px;
  font-size: 14.5px;
  line-height: 20px;
  color: #444;
}
.weather-temp {
  color: #111;
}
.win-logo {
  flex: none;
}
.search {
  display: flex;
  align-items: center;
  width: 273.5px;
  height: 38px;
  margin-left: 17.5px;
  padding: 0 5px 0 14px;
  flex: none;
  border: 1px solid #d8dee6;
  border-radius: 19px;
  background: #f9fafc;
  font-size: 15.5px;
  color: #555;
}
.search span {
  margin-left: 12px;
}
.search-art {
  margin-left: auto;
}
.task-icons {
  display: flex;
  gap: 25px;
  margin-left: 16px;
  flex: none;
}
.task-item {
  position: relative;
  display: flex;
  align-items: center;
  justify-content: center;
  width: 30px;
  height: 59px;
}
.task-item svg {
  position: relative;
}
.task-active::before {
  content: "";
  position: absolute;
  top: 5px;
  left: -10px;
  width: 49px;
  height: 48px;
  border-radius: 5px;
  background: #f9f9f9;
  box-shadow: 3px 0 0 -1px #fbfbfb;
}
.task-active::after {
  content: "";
  position: absolute;
  left: 5px;
  bottom: 5px;
  width: 20px;
  height: 4px;
  border-radius: 2px;
  background: #0078d4;
}
.task-running::after {
  content: "";
  position: absolute;
  left: 11px;
  bottom: 5px;
  width: 8px;
  height: 4px;
  border-radius: 2px;
  background: #7a7a7a;
}
.tray {
  display: flex;
  align-items: center;
  margin-left: auto;
  padding-right: 23px;
  font-size: 14.5px;
}
.tray-slot {
  display: flex;
  align-items: center;
  justify-content: center;
  width: 40px;
}
.tray-lang {
  display: flex;
  flex-direction: column;
  align-items: center;
  width: 56px;
  padding-bottom: 2px;
  line-height: 20px;
}
.tray-group {
  display: flex;
  margin-left: 4px;
}
.tray-mini {
  display: flex;
  align-items: center;
  justify-content: center;
  width: 30px;
}
.clock {
  display: flex;
  flex-direction: column;
  align-items: flex-end;
  width: 93px;
  padding-bottom: 4px;
  line-height: 20px;
}
.bell {
  margin: 0 2px 0 9px;
}
.bell-glyph {
  font: bold 8px "Liberation Sans", sans-serif;
  fill: #fff;
}
.bell-z {
  font: bold 8px "Liberation Sans", sans-serif;
  fill: #1a1a1a;
}
.office-glyph {
  font: bold 11px "Liberation Sans", sans-serif;
  fill: #fff;
}
```
